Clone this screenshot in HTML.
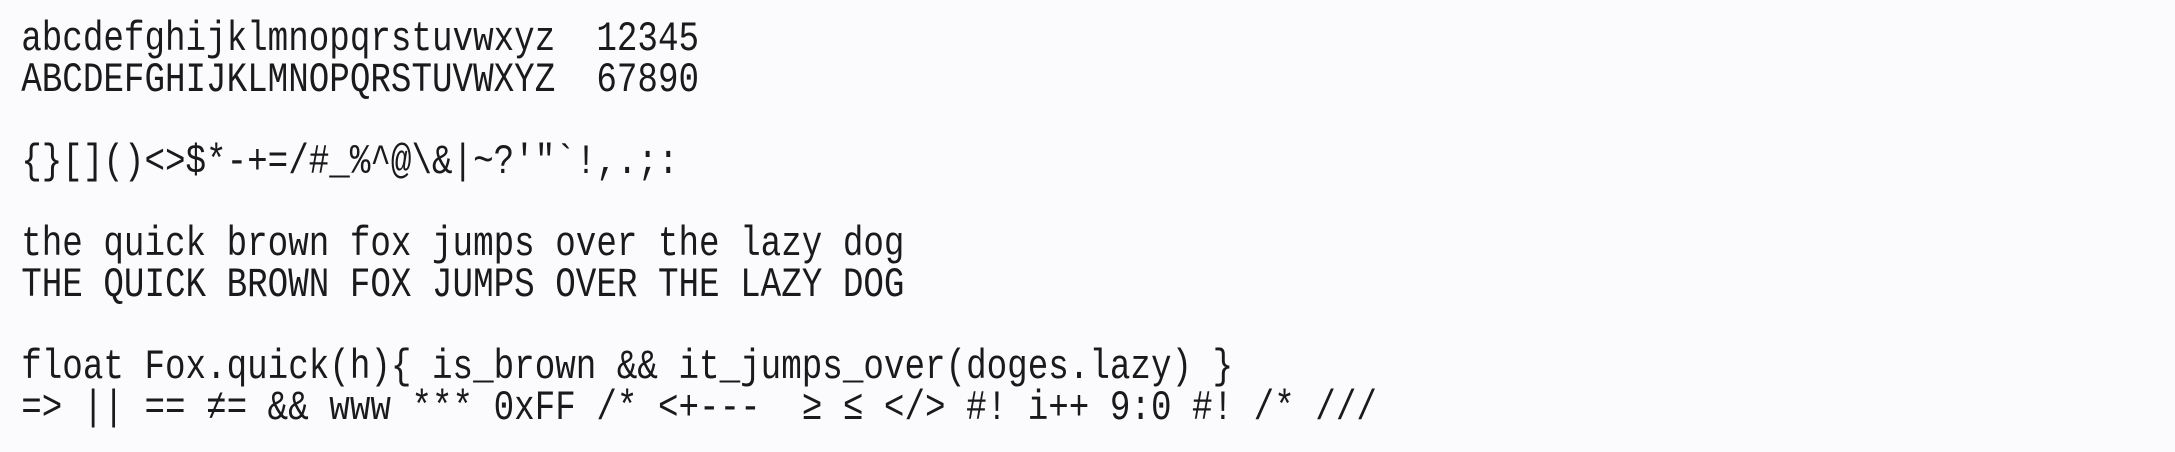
<!DOCTYPE html>
<html><head><meta charset="utf-8"><style>
html,body{margin:0;padding:0;background:#fbfbfe;width:2175px;height:452px;overflow:hidden}
pre{margin:0;padding:19px 0 0 26px;font-family:"Liberation Mono","DejaVu Sans Mono",monospace;font-size:42px;line-height:41px;color:#1a1a1a;transform:scaleX(0.815);transform-origin:0 0;width:2600px}
</style></head><body><pre>abcdefghijklmnopqrstuvwxyz  12345
ABCDEFGHIJKLMNOPQRSTUVWXYZ  67890

{}[]()&lt;&gt;$*-+=/#_%^@\&amp;|~?'"`!,.;:

the quick brown fox jumps over the lazy dog
THE QUICK BROWN FOX JUMPS OVER THE LAZY DOG

float Fox.quick(h){ is_brown &amp;&amp; it_jumps_over(doges.lazy) }
=&gt; || == ≠= &amp;&amp; www *** 0xFF /* &lt;+---  ≥ ≤ &lt;/&gt; #! i++ 9:0 #! /* ///</pre></body></html>
